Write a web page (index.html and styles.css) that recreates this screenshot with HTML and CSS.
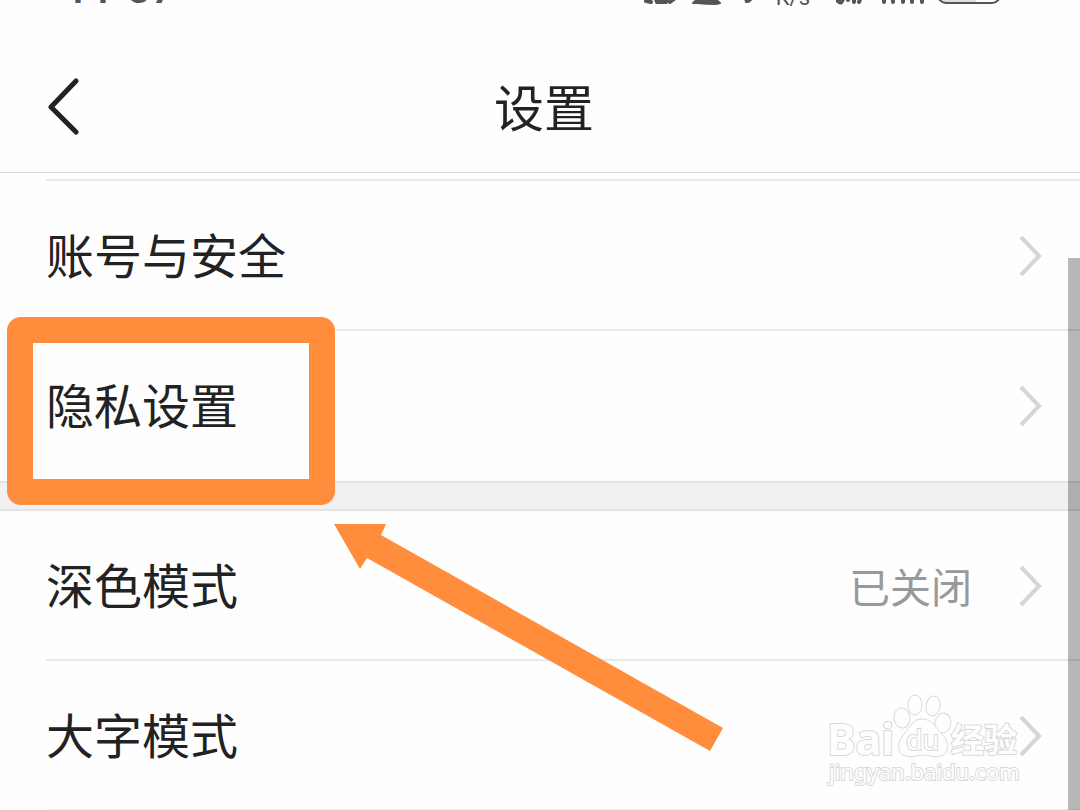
FILE: index.html
```html
<!DOCTYPE html>
<html lang="zh-CN">

<head>
    <meta charset="UTF-8">
    <meta name="viewport" content="width=device-width, initial-scale=1.0">
    <link rel="stylesheet" href="styles.css">
    <title>设置</title>
</head>

<body>
    <div class="status-bar">
        <div class="clock">11<span class="colon">:</span>57</div>
        <div class="status-right">
            <svg class="status-icons" width="112" height="40" viewBox="0 0 112 40" aria-hidden="true">
                <path d="M2 36l5 1M10 28l3 9h9l2-5M26 37l4-3" />
                <path class="filled" d="M49 38l6-5q8 3 15 0l6 5-4 1q-10 0-19-1z" />
                <path class="filled" d="M109 28q-1 10-7 9l-1-4z" />
            </svg>
            <span class="speed">K/s</span>
            <svg class="status-icons" width="168" height="40" viewBox="0 0 168 40" aria-hidden="true">
                <path d="M4 36q4 4 5-3M14 34v1M20 26v11M25 37l2-5" />
                <path d="M50 32v5M59 28v9M69 24v13M78 20v17M88 16v21" />
                <rect class="battery-fill" x="106" y="14" width="36" height="23" />
                <rect class="battery" x="104" y="12" width="62" height="26" rx="8" />
            </svg>
        </div>
    </div>

    <header class="header">
        <button class="back" type="button" aria-label="返回">
            <svg width="34" height="58" viewBox="0 0 34 58">
                <path d="M30 4L5 30l25 25" />
            </svg>
        </button>
        <h1 class="title">设置</h1>
    </header>

    <main class="settings">
        <section class="group">
            <a class="row" href="#account">
                <span class="label">账号与安全</span>
                <svg class="chevron" width="26" height="44" viewBox="0 0 26 44">
                    <path d="M3 4l18 19L3 42" />
                </svg>
            </a>
            <a class="row" href="#privacy">
                <span class="label">隐私设置</span>
                <svg class="chevron" width="26" height="44" viewBox="0 0 26 44">
                    <path d="M3 4l18 19L3 42" />
                </svg>
                <span class="highlight"></span>
            </a>
        </section>
        <div class="divider"></div>
        <section class="group">
            <a class="row" href="#dark">
                <span class="label">深色模式</span>
                <span class="value">已关闭</span>
                <svg class="chevron" width="26" height="44" viewBox="0 0 26 44">
                    <path d="M3 4l18 19L3 42" />
                </svg>
            </a>
            <a class="row" href="#large-text">
                <span class="label">大字模式</span>
                <svg class="chevron" width="26" height="44" viewBox="0 0 26 44">
                    <path d="M3 4l18 19L3 42" />
                </svg>
            </a>
            <svg class="arrow" width="390" height="228" viewBox="0 0 390 228" aria-hidden="true">
                <path d="M0 0h52l-5 11 342 193-13 23L33 34l-7 11z" />
            </svg>
        </section>
    </main>

    <div class="scrollbar"></div>

    <svg class="watermark" width="200" height="96" viewBox="0 0 200 96">
        <text class="wm-logo" x="1" y="63">Bai</text>
        <ellipse cx="76" cy="26" rx="8" ry="10" transform="rotate(-8 76 26)" />
        <ellipse cx="89" cy="13" rx="7" ry="10" />
        <ellipse cx="107" cy="14" rx="7" ry="10" transform="rotate(10 107 14)" />
        <ellipse cx="117" cy="31" rx="8" ry="10" transform="rotate(10 117 31)" />
        <path d="M96 27c-9 0-12 8-18 15-7 8-8 20 2 22 7 2 10-1 17-1s11 3 18 1c9-3 8-14 1-22-7-7-10-15-20-15z" />
        <text class="wm-du" x="80" y="58">du</text>
        <text class="wm-cn" x="125" y="60">经验</text>
        <text class="wm-url" x="3" y="88">jingyan.baidu.com</text>
    </svg>
</body>

</html>
```
FILE: styles.css
```css
* {
    margin: 0;
    padding: 0;
    box-sizing: border-box;
}

body {
    position: relative;
    height: 100vh;
    overflow: hidden;
    background: #fefefe;
    color: #222;
    font-family: "Noto Sans CJK SC", sans-serif;
}

/* status bar, scrolled mostly out of view */
.status-bar {
    display: flex;
    justify-content: space-between;
    align-items: flex-end;
    height: 5px;
    padding: 0 78px 0 64px;
    color: #555;
}

.clock {
    display: flex;
    align-items: flex-end;
    font-family: Roboto, sans-serif;
    font-size: 44px;
    font-weight: 500;
    line-height: 34px;
}

.colon {
    margin-bottom: 6px;
}

.status-right {
    display: flex;
    align-items: flex-end;
    gap: 24px;
}

.status-icons {
    flex: none;
    fill: none;
    stroke: #555;
    stroke-width: 4;
    stroke-linecap: round;
    stroke-linejoin: round;
}

.status-icons .filled {
    fill: #555;
    stroke-width: 2;
}

.status-icons .battery {
    stroke-width: 2;
}

.status-icons .battery-fill {
    fill: #ddd;
    stroke: none;
}

.speed {
    margin-left: -4px;
    font-family: Roboto, sans-serif;
    font-size: 22px;
    line-height: 14px;
}

.header {
    display: grid;
    grid-template-columns: 80px 1fr 80px;
    align-items: center;
    height: 168px;
    padding: 34px 0 0 8px;
    border-bottom: 1px solid #d6d6d6;
}

.back {
    display: flex;
    justify-content: flex-end;
    border: none;
    background: none;
    padding-right: 8px;
    cursor: pointer;
}

.back svg {
    fill: none;
    stroke: #222;
    stroke-width: 5;
    stroke-linecap: round;
    stroke-linejoin: round;
}

.title {
    padding-bottom: 2px;
    font-size: 50px;
    font-weight: 400;
    line-height: 72px;
    text-align: center;
}

.settings {
    padding-top: 6px;
}

.group {
    position: relative;
    padding-bottom: 2px;
}

.row {
    position: relative;
    display: flex;
    align-items: center;
    height: 150px;
    margin-left: 46px;
    padding-right: 36px;
    border-top: 2px solid #e9e9e9;
    color: #222;
    text-decoration: none;
}

.divider + .group .row:first-child {
    height: 148px;
    border-top: none;
}

.divider + .group .row:nth-child(2) {
    height: 152px;
    border-bottom: 2px solid #efefef;
}

.label {
    flex: 1;
    padding-bottom: 4px;
    font-size: 48px;
    line-height: 72px;
}

.value {
    margin-right: 46px;
    color: #999;
    font-size: 41px;
}

.chevron {
    fill: none;
    stroke: #d6d6d6;
    stroke-width: 4;
}

.divider {
    height: 30px;
    border-top: 2px solid #e4e4e4;
    border-bottom: 2px solid #e4e4e4;
    background: #f1f1f1;
}

/* callout marks */
.highlight {
    position: absolute;
    top: -14px;
    left: -39px;
    width: 328px;
    height: 188px;
    border: 26px solid #ff8d3b;
    border-radius: 14px;
    z-index: 1;
}

.arrow {
    position: absolute;
    top: 13px;
    left: 334px;
    fill: #ff8d3b;
}

.scrollbar {
    position: absolute;
    top: 258px;
    right: 0;
    bottom: 0;
    width: 12px;
    background: rgba(0, 0, 0, 0.28);
}

.watermark {
    position: absolute;
    right: 54px;
    bottom: 22px;
    overflow: visible;
    fill: #fefefe;
    stroke: #d9d9d9;
    stroke-width: 1;
}

.watermark text {
    font-family: "Noto Sans", "Noto Sans CJK SC", sans-serif;
    paint-order: stroke;
    stroke-width: 2;
}

.watermark .wm-logo {
    font-size: 43px;
    font-weight: 700;
}

.watermark .wm-du {
    font-size: 27px;
}

.watermark .wm-cn {
    font-size: 33px;
    font-weight: 700;
}

.watermark .wm-url {
    font-size: 22px;
}
```
